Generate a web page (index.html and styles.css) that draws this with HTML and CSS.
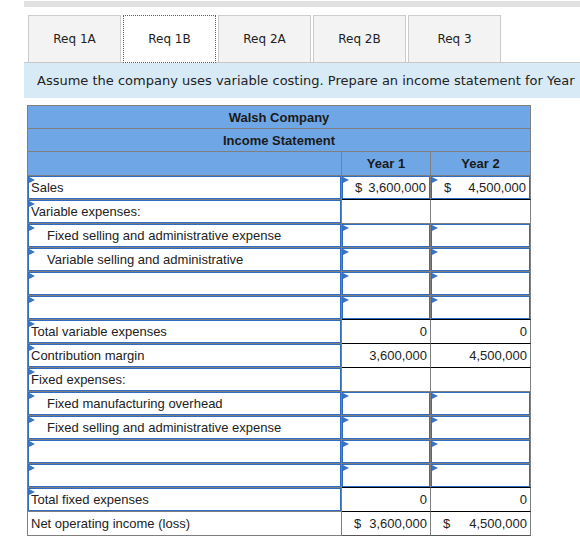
FILE: index.html
```html
<!DOCTYPE html>
<html>
<head>
<meta charset="utf-8">
<link rel="stylesheet" href="styles.css">
</head>
<body>
<div class="page">
  <div class="topbar"></div>
  <div class="tabs">
    <div class="tab">Req 1A</div>
    <div class="tab active">Req 1B</div>
    <div class="tab">Req 2A</div>
    <div class="tab">Req 2B</div>
    <div class="tab">Req 3</div>
  </div>
  <div class="instr">Assume the company uses variable costing. Prepare an income statement for Year</div>

  <div class="stmt">
    <div class="hd span">Walsh Company</div>
    <div class="hd span">Income Statement</div>
    <div class="hd"></div>
    <div class="hd yr">Year 1</div>
    <div class="hd yr">Year 2</div>

    <div class="c"><div class="inp"><span class="lbl">Sales</span></div></div>
    <div class="c"><div class="inp money"><span>$</span><span>3,600,000</span></div></div>
    <div class="c"><div class="inp money"><span>$</span><span>4,500,000</span></div></div>

    <div class="c"><div class="inp"><span class="lbl">Variable expenses:</span></div></div>
    <div class="c tt"></div>
    <div class="c tt"></div>

    <div class="c"><div class="inp"><span class="lbl ind">Fixed selling and administrative expense</span></div></div>
    <div class="c"><div class="inp"></div></div>
    <div class="c"><div class="inp"></div></div>

    <div class="c"><div class="inp"><span class="lbl ind">Variable selling and administrative</span></div></div>
    <div class="c"><div class="inp"></div></div>
    <div class="c"><div class="inp"></div></div>

    <div class="c"><div class="inp"></div></div>
    <div class="c"><div class="inp"></div></div>
    <div class="c"><div class="inp"></div></div>

    <div class="c"><div class="inp"></div></div>
    <div class="c"><div class="inp"></div></div>
    <div class="c"><div class="inp"></div></div>

    <div class="c"><div class="inp"><span class="lbl">Total variable expenses</span></div></div>
    <div class="c tt num">0</div>
    <div class="c tt num">0</div>

    <div class="c"><div class="inp"><span class="lbl">Contribution margin</span></div></div>
    <div class="c tt num">3,600,000</div>
    <div class="c tt num">4,500,000</div>

    <div class="c"><div class="inp"><span class="lbl">Fixed expenses:</span></div></div>
    <div class="c tt"></div>
    <div class="c tt"></div>

    <div class="c"><div class="inp"><span class="lbl ind">Fixed manufacturing overhead</span></div></div>
    <div class="c"><div class="inp"></div></div>
    <div class="c"><div class="inp"></div></div>

    <div class="c"><div class="inp"><span class="lbl ind">Fixed selling and administrative expense</span></div></div>
    <div class="c"><div class="inp"></div></div>
    <div class="c"><div class="inp"></div></div>

    <div class="c"><div class="inp"></div></div>
    <div class="c"><div class="inp"></div></div>
    <div class="c"><div class="inp"></div></div>

    <div class="c"><div class="inp"></div></div>
    <div class="c"><div class="inp"></div></div>
    <div class="c"><div class="inp"></div></div>

    <div class="c"><div class="inp"><span class="lbl">Total fixed expenses</span></div></div>
    <div class="c tt num">0</div>
    <div class="c tt num">0</div>

    <div class="c plain"><span class="lbl">Net operating income (loss)</span></div>
    <div class="c tt last moneyc"><span>$</span><span>3,600,000</span></div>
    <div class="c tt last moneyc"><span>$</span><span>4,500,000</span></div>
  </div>
</div>
</body>
</html>
```

FILE: styles.css
```css
html, body {
  margin: 0;
  padding: 0;
  background: #fff;
  overflow: hidden;
}
.page {
  width: 556px;
  padding-left: 24px;
}
.topbar {
  height: 6px;
  margin-top: 1px;
  background: #e0e0e0;
}
.tabs {
  display: flex;
  gap: 2px;
  margin-top: 8px;
  padding-left: 4px;
  border-bottom: 1px solid #c8c8c8;
  height: 47px;
}
.tab {
  box-sizing: border-box;
  width: 93px;
  height: 47px;
  border: 1px solid #cccccc;
  border-bottom: none;
  background: #f3f3f3;
  font-family: "DejaVu Sans", Verdana, sans-serif;
  font-size: 12px;
  color: #222;
  display: flex;
  align-items: center;
  justify-content: center;
}
.tab.active {
  background: #fff;
  border: 1px dotted #2a62c0;
  height: 48px;
  position: relative;
  z-index: 1;
}
.instr {
  background: #d9eaf7;
  height: 35px;
  padding-left: 13px;
  display: flex;
  align-items: center;
  white-space: nowrap;
  font-family: "DejaVu Sans", Verdana, sans-serif;
  font-size: 13px;
  color: #222;
}
.stmt {
  margin-top: 7px;
  margin-left: 3px;
  width: 504px;
  box-sizing: border-box;
  display: grid;
  grid-template-columns: 314px 89px 100px;
  grid-template-rows: 23px 23px 24px;
  grid-auto-rows: 24px;
  border-left: 1px solid #7f7f7f;
  border-top: 1px solid #7f7f7f;
  font-family: "Liberation Sans", Arial, sans-serif;
  font-size: 13px;
  color: #222;
}
.hd {
  box-sizing: border-box;
  background: #6fa7e6;
  border-right: 1px solid #7f7f7f;
  border-bottom: 1px solid #7f7f7f;
  font-weight: bold;
  color: #1a1a1a;
  display: flex;
  align-items: center;
  justify-content: center;
}
.hd.span {
  grid-column: 1 / span 3;
}
.c {
  box-sizing: border-box;
  border-right: 1px solid #7f7f7f;
  border-bottom: 1px solid #7f7f7f;
  background: #fff;
  min-height: 0;
}
.c.tt {
  border-top: 1px solid #000;
  margin-top: -1px;
  position: relative;
}
.c.last {
  border-bottom: 1px solid #555;
}
.inp {
  box-sizing: border-box;
  height: 100%;
  border: 1px solid #2f6dc2;
  position: relative;
  display: flex;
  align-items: center;
  background: #fff;
}
.inp::before {
  content: "";
  position: absolute;
  left: 0;
  top: 0;
  border-left: 6px solid #3a76c8;
  border-top: 3px solid transparent;
  border-bottom: 3px solid transparent;
}
.lbl {
  padding-left: 2px;
  white-space: nowrap;
}
.lbl.ind {
  padding-left: 18px;
}
.plain {
  display: flex;
  align-items: center;
}
.plain .lbl {
  padding-left: 3px;
}
.num {
  display: flex;
  align-items: center;
  justify-content: flex-end;
  padding-right: 3px;
}
.money, .moneyc {
  display: flex;
  align-items: center;
  justify-content: space-between;
  padding-left: 12px;
  padding-right: 3px;
}
```
